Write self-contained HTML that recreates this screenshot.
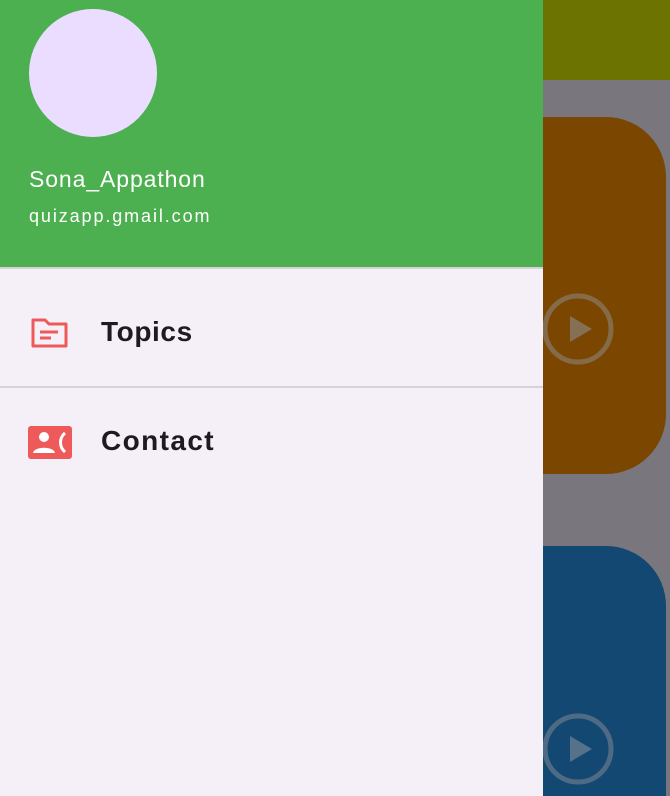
<!DOCTYPE html>
<html style="width:670px;height:796px;overflow:hidden"><head><style>
*{margin:0;padding:0;box-sizing:border-box}
body{width:670px;height:796px;overflow:hidden;position:relative;background:#79777d;font-family:"Liberation Sans",sans-serif}
.r{position:absolute}
</style></head><body>
<div class="r" style="left:0;top:0;width:670px;height:80px;background:#6d7300"></div>
<div class="r" style="left:480px;top:117px;width:186px;height:357px;background:#7a4600;border-radius:60px"></div>
<div class="r" style="left:480px;top:546px;width:186px;height:250px;background:#134872;border-radius:60px 60px 0 0"></div>
<svg class="r" style="left:540px;top:290px" width="80" height="80"><circle cx="38" cy="39" r="33" fill="none" stroke="#8a7a6a" stroke-width="5" opacity=".7"/><path d="M30 26 L52 39 L30 52Z" fill="#8a7a6a" opacity=".8"/></svg>
<svg class="r" style="left:540px;top:710px" width="80" height="80"><circle cx="38" cy="39" r="33" fill="none" stroke="#4f6a84" stroke-width="5"/><path d="M30 26 L52 39 L30 52Z" fill="#56718a"/></svg>
<div class="r" style="left:0;top:0;width:543px;height:796px;background:#f5eff7"></div>
<div class="r" style="left:0;top:0;width:543px;height:267px;background:#4caf50"></div>
<div class="r" style="left:29px;top:9px;width:128px;height:128px;border-radius:50%;background:#eaddff"></div>
<div class="r" style="left:29px;top:166px;color:#fff;font-size:23px;letter-spacing:0.9px">Sona_Appathon</div>
<div class="r" style="left:29px;top:206px;color:#fff;font-size:18px;letter-spacing:1.9px">quizapp.gmail.com</div>
<div class="r" style="left:0;top:267px;width:543px;height:2px;background:#d6d2d8"></div>
<div class="r" style="left:0;top:386px;width:543px;height:2px;background:#d6d2d8"></div>
<svg class="r" style="left:31px;top:318px" width="38" height="30" viewBox="0 0 38 30"><path d="M2 2 H14 L18 6 H35 V28 H2Z" fill="none" stroke="#ee5a5a" stroke-width="3" stroke-linejoin="round"/><path d="M9 14 H27 M9 20 H20" stroke="#ee5a5a" stroke-width="3"/></svg>
<div class="r" style="left:101px;top:316px;font-size:28px;font-weight:bold;color:#1d1b20;letter-spacing:0.6px">Topics</div>
<svg class="r" style="left:28px;top:426px" width="44" height="33" viewBox="0 0 44 33"><rect width="44" height="33" rx="3" fill="#ee5a5a"/><circle cx="16" cy="11" r="5" fill="#fff"/><path d="M5 27 C6 20 26 20 27 27Z" fill="#fff"/><path d="M37 7 C31 12 31 21 37 26" fill="none" stroke="#fff" stroke-width="3"/></svg>
<div class="r" style="left:101px;top:425px;font-size:28px;font-weight:bold;color:#1d1b20;letter-spacing:1.4px">Contact</div>
</body></html>
